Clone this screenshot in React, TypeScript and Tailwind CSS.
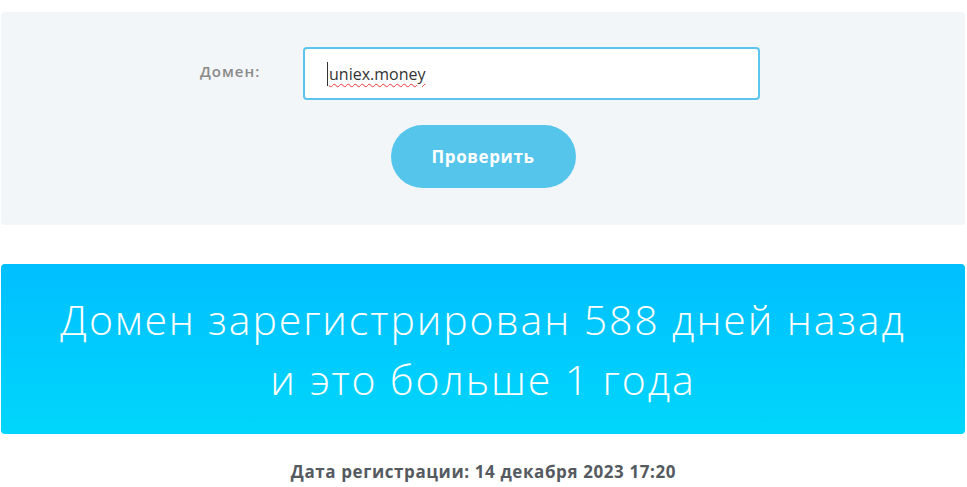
import React from "react";

export default function App() {
  return (
    <div className="w-[967px] h-[487px] bg-white overflow-hidden" style={{ fontFamily: "'Open Sans', 'Noto Sans', sans-serif" }}>
      <div className="pt-[12px] pl-[1px] pr-[2px]">
        <div className="bg-[#f3f6f8] rounded-[4px] h-[213px] flex flex-col items-center pt-[35px]">
          <div className="flex items-center mr-[6px]">
            <label className="text-[15px] font-semibold text-[#8a8a8a] w-[103px] tracking-[1px] text-left mt-[-4px]">Домен:</label>
            <div className="w-[457px] h-[53px] border-2 border-[#5bc5ee] rounded-[4px] bg-white flex items-center pl-[22px]">
              <span className="text-[16px] text-[#333] border-l border-[#333] pl-[1px] underline decoration-wavy decoration-[#e33] underline-offset-[3px] decoration-1">uniex.money</span>
            </div>
          </div>
          <button className="mt-[25px] w-[185px] h-[63px] rounded-full bg-[#56c5ec] text-white font-bold text-[17px] tracking-[0.6px]">Проверить</button>
        </div>
      </div>
      <div className="mt-[39px] mx-[1px] mr-[2px] h-[170px] rounded-[4px] bg-gradient-to-b from-[#00bfff] to-[#00d6fb] flex items-center justify-center">
        <p className="text-white text-[41px] font-light leading-[60px] tracking-[1.9px] text-center">
          Домен зарегистрирован 588 дней назад<br />и это больше 1 года
        </p>
      </div>
      <div className="mt-[25px] text-center text-[17px] font-bold tracking-[0.6px] text-[#555a60]">Дата регистрации: 14 декабря 2023 17:20</div>
    </div>
  );
}
